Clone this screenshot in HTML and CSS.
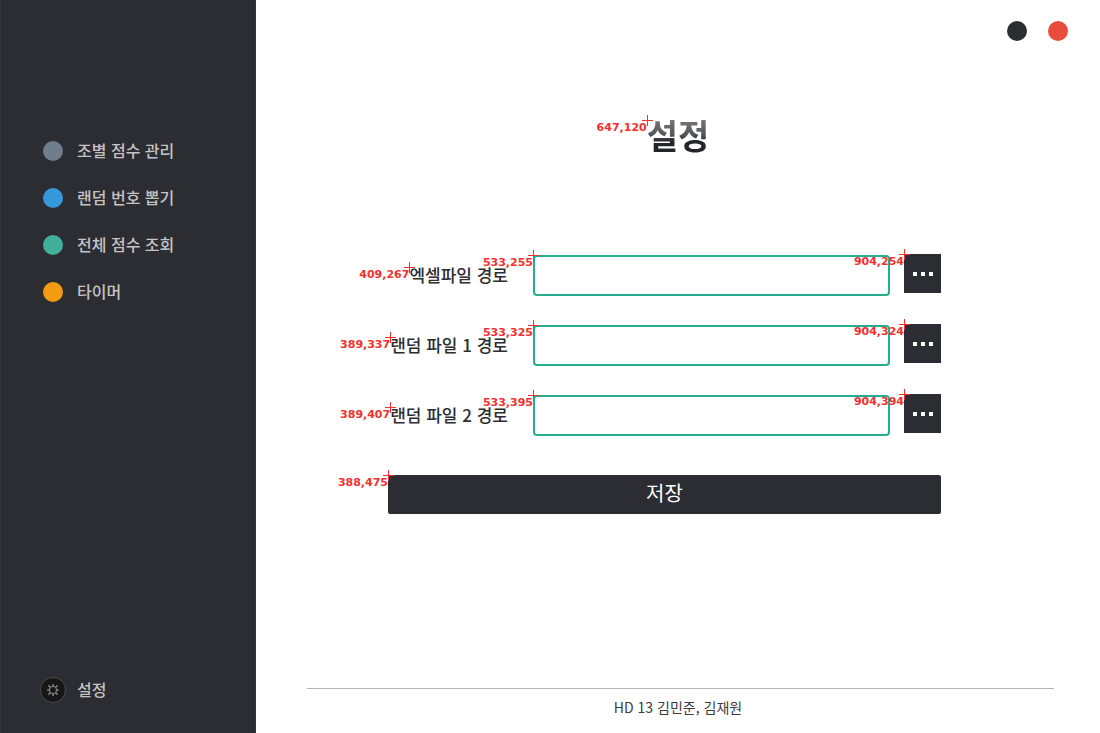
FILE: index.html
```html
<!DOCTYPE html>
<html lang="ko">
<head>
<meta charset="utf-8">
<title>설정</title>
<link rel="stylesheet" href="styles.css">
</head>
<body>
<div class="app">
  <aside class="sidebar">
    <nav class="menu">
      <a class="menu-item" href="#scores"><span class="dot dot-gray"></span><span class="menu-text">조별 점수 관리</span></a>
      <a class="menu-item" href="#random"><span class="dot dot-blue"></span><span class="menu-text">랜덤 번호 뽑기</span></a>
      <a class="menu-item" href="#total"><span class="dot dot-green"></span><span class="menu-text">전체 점수 조회</span></a>
      <a class="menu-item" href="#timer"><span class="dot dot-orange"></span><span class="menu-text">타이머</span></a>
    </nav>
    <a class="menu-item settings-link" href="#settings">
      <svg class="gear" viewBox="0 0 26 26" aria-hidden="true">
        <circle cx="13" cy="13" r="12.5" fill="#161616" stroke="#4a4a4c"/>
        <circle cx="13" cy="13" r="3.6" fill="none" stroke="#77787a" stroke-width="1.4"/>
        <path d="M13 9V7M13 17v2M9 13H7M17 13h2M10.2 10.2 8.4 8.4M15.8 10.2l1.8-1.8M10.2 15.8l-1.8 1.8M15.8 15.8l1.8 1.8" stroke="#77787a" stroke-width="1.7"/>
      </svg>
      <span class="menu-text">설정</span></a>
  </aside>
  <main class="main">
    <div class="window-controls">
      <button class="dot dot-dark" type="button" aria-label="최소화"></button>
      <button class="dot dot-red" type="button" aria-label="닫기"></button>
    </div>
    <h1 class="title"><span class="anchor"><span class="title-text">설정</span><span class="mark mark-title">647,120</span></span></h1>
    <form class="form">
      <div class="row">
        <label class="label" for="excel"><span class="anchor">엑셀파일 경로<span class="mark mark-label">409,267</span></span></label>
        <div class="field anchor"><input class="input" id="excel" type="text"><span class="mark">533,255</span></div>
        <div class="anchor"><button class="browse" type="button" aria-label="찾아보기"><i></i><i></i><i></i></button><span class="mark">904,254</span></div>
      </div>
      <div class="row">
        <label class="label" for="random1"><span class="anchor">랜덤 파일 1 경로<span class="mark mark-label">389,337</span></span></label>
        <div class="field anchor"><input class="input" id="random1" type="text"><span class="mark">533,325</span></div>
        <div class="anchor"><button class="browse" type="button" aria-label="찾아보기"><i></i><i></i><i></i></button><span class="mark">904,324</span></div>
      </div>
      <div class="row">
        <label class="label" for="random2"><span class="anchor">랜덤 파일 2 경로<span class="mark mark-label">389,407</span></span></label>
        <div class="field anchor"><input class="input" id="random2" type="text"><span class="mark">533,395</span></div>
        <div class="anchor"><button class="browse" type="button" aria-label="찾아보기"><i></i><i></i><i></i></button><span class="mark">904,394</span></div>
      </div>
      <div class="anchor save-wrap"><button class="save" type="submit">저장</button><span class="mark">388,475</span></div>
    </form>
    <footer class="footer">HD 13 김민준, 김재원</footer>
  </main>
</div>
</body>
</html>
```
FILE: styles.css
```css
* {
  box-sizing: border-box;
}

body {
  margin: 0;
  font-family: "Noto Sans CJK KR", sans-serif;
  color: #2c2d32;
  background: #fff;
}

button,
input {
  font: inherit;
}

.app {
  display: flex;
  min-height: 100vh;
}

.sidebar {
  flex: 0 0 256px;
  display: flex;
  flex-direction: column;
  justify-content: space-between;
  padding: 127px 0 20px;
  border: 1px solid #35363b;
  border-top: 0;
  border-bottom: 0;
  background: #2c2d32;
}

.menu-item {
  display: flex;
  align-items: center;
  gap: 14px;
  height: 47px;
  padding-left: 42px;
  font-size: 16px;
  line-height: 24px;
  font-weight: 500;
  color: #c4c4c5;
  text-decoration: none;
}

.menu-text {
  padding-bottom: 2px;
}

.settings-link {
  gap: 11px;
  padding-left: 39px;
}

.gear {
  width: 26px;
  height: 26px;
}

.dot {
  width: 20px;
  height: 20px;
  padding: 0;
  border: 0;
  border-radius: 50%;
}

.dot-gray { background: #6f7d8c; }
.dot-blue { background: #3598db; }
.dot-green { background: #40b09a; }
.dot-orange { background: #f39c12; }
.dot-dark { background: #2c2d32; }
.dot-red { background: #e74c3c; }

.main {
  flex: 1;
  display: flex;
  flex-direction: column;
}

.window-controls {
  display: flex;
  justify-content: flex-end;
  gap: 21px;
  padding: 21px 32px;
}

.title {
  margin: 47px 0 93px;
  font-size: 34px;
  line-height: 52px;
  font-weight: 700;
  text-align: center;
}

.title-text {
  background: linear-gradient(#777 20%, #55565a 50%, #24252b 65%);
  background-clip: text;
  color: transparent;
}

.anchor {
  position: relative;
}

.title .anchor {
  display: inline-block;
}

.form {
  display: grid;
  gap: 28px;
  margin: 0 159px 0 132px;
}

.row {
  display: grid;
  grid-template-columns: 120px 1fr 37px;
  height: 42px;
}

.label {
  align-self: center;
  font-size: 17px;
  line-height: 26px;
  font-weight: 500;
  text-align: right;
  white-space: nowrap;
}

.label .anchor {
  display: inline-block;
}

.field {
  margin: 1px 14px 0 25px;
}

.input {
  display: block;
  width: 100%;
  height: 41px;
  padding: 0 10px;
  border: 2px solid #27ae90;
  border-radius: 4px;
  background: #fff;
}

.browse {
  display: flex;
  align-items: center;
  justify-content: center;
  gap: 4px;
  width: 37px;
  height: 39px;
  padding: 0;
  border: 0;
  background: #2c2d32;
}

.browse i {
  width: 4px;
  height: 4px;
  background: #fff;
}

.save-wrap {
  margin-top: 11px;
}

.save {
  display: block;
  width: 100%;
  height: 39px;
  padding: 0 0 3px;
  border: 0;
  border-radius: 2px;
  font-size: 20px;
  line-height: 36px;
  color: #fff;
  background: #2c2d32;
}

/* Coordinate callouts: the text ends at the corner that the cross marks. */
.mark {
  position: absolute;
  top: 0;
  right: 100%;
  font: 700 11px/15px "DejaVu Sans", sans-serif;
  color: #f5302e;
  white-space: nowrap;
}

.mark::before,
.mark::after {
  content: "";
  position: absolute;
  background: #f5302e;
}

.mark::before {
  top: 0;
  right: -6px;
  width: 11px;
  height: 1px;
}

.mark::after {
  top: -5px;
  right: -1px;
  width: 1px;
  height: 11px;
}

.mark-title {
  top: 11px;
}

.mark-label {
  top: 5px;
}

.footer {
  margin: auto 46px 0 51px;
  padding: 8px 5px 15px 0;
  border-top: 1px solid #b3b3b3;
  font-size: 14px;
  line-height: 21px;
  text-align: center;
  color: #3c3c3f;
}
```
